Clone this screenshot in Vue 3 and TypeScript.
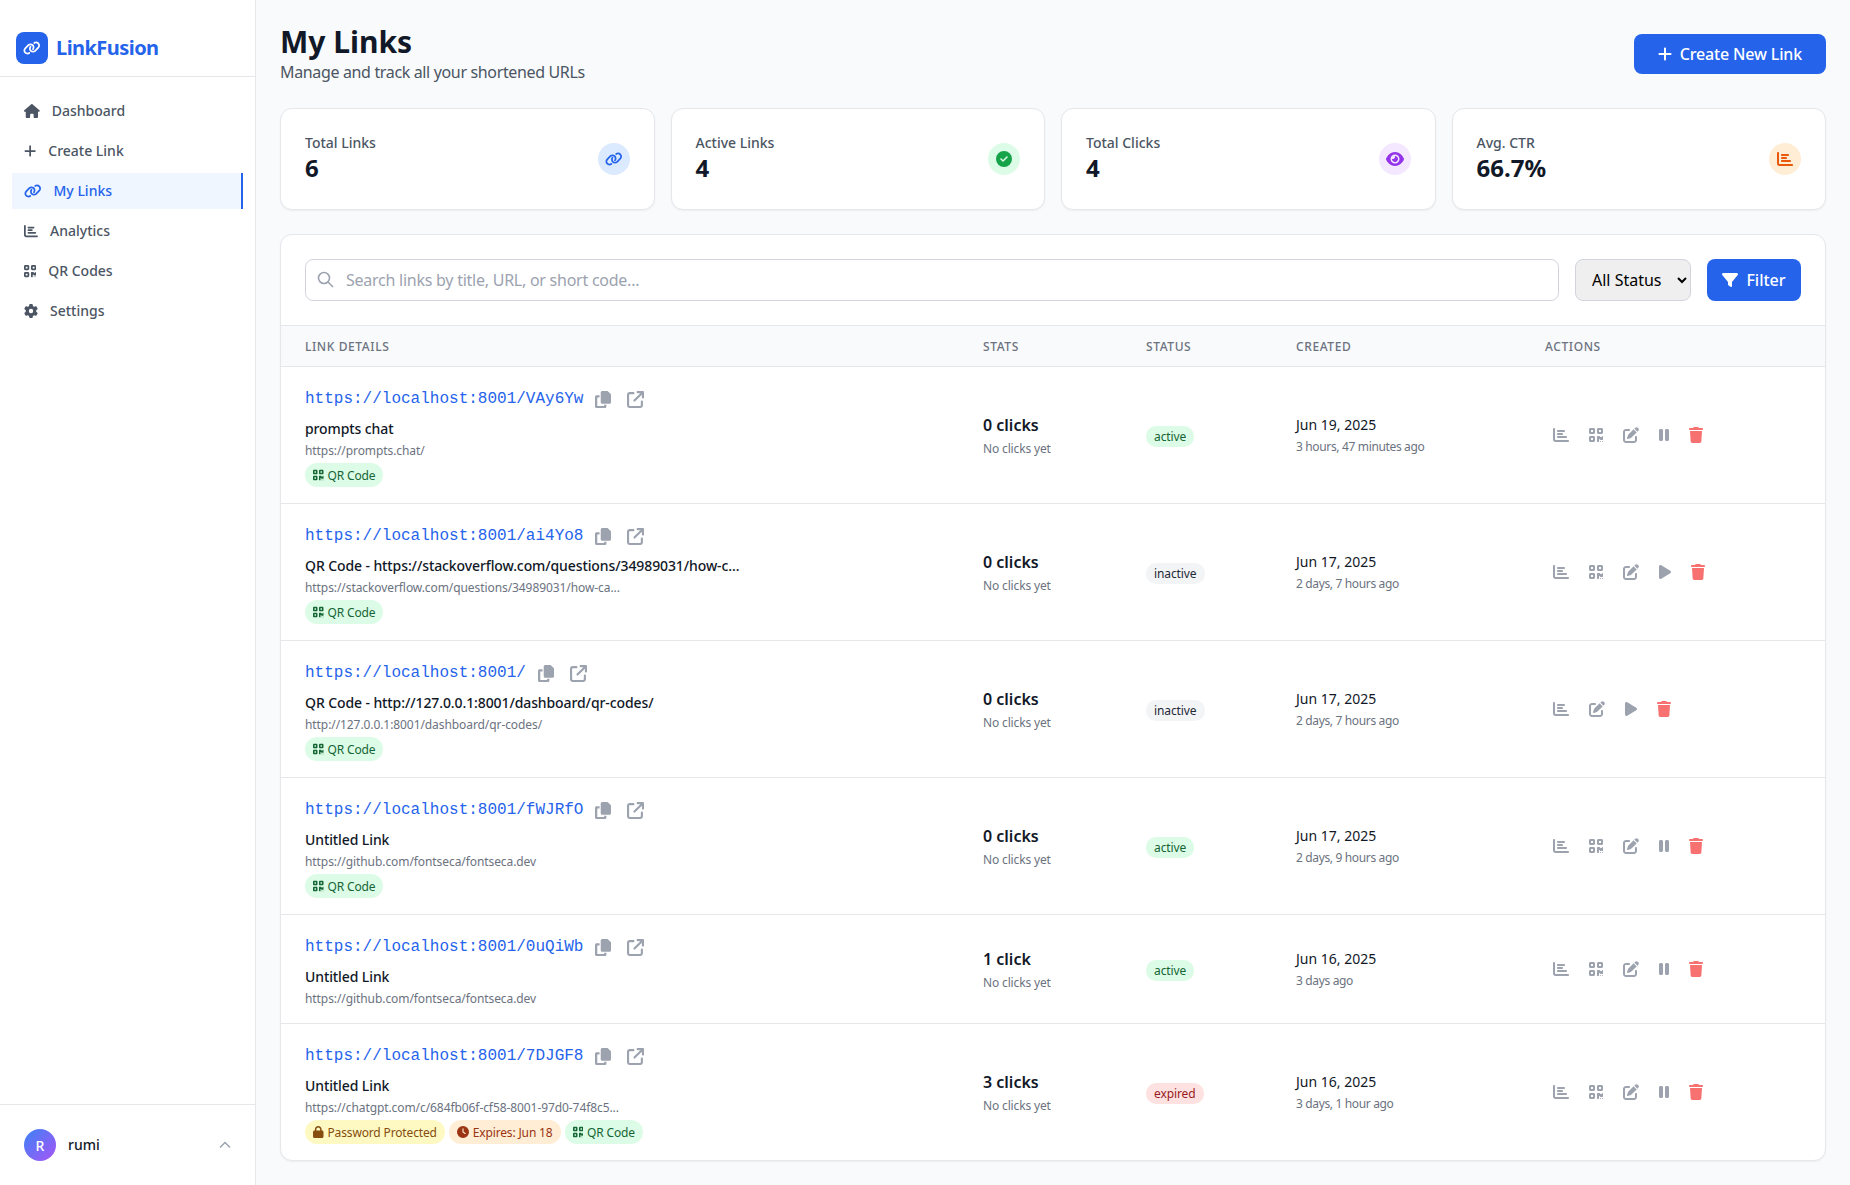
<template>
  <div class="layout">
    <aside class="sidebar">
      <div class="brand">
        <span class="brand-mark"><svg viewBox="0 0 640 512" width="17.5" height="14"><path :d="icons.link.d" /></svg></span>
        <span class="brand-name">LinkFusion</span>
      </div>
      <nav class="nav">
        <a v-for="item in navItems" :key="item.label" class="nav-item" :class="{ active: item.active }">
          <svg :viewBox="icons[item.icon].vb" :width="item.w" height="14"><path :d="icons[item.icon].d" /></svg>
          <span>{{ item.label }}</span>
        </a>
      </nav>
      <div class="user">
        <span class="avatar">R</span>
        <span class="user-name">rumi</span>
        <svg class="chevron" viewBox="0 0 12 8" width="12" height="8"><path d="M1 6.5 6 1.5l5 5" /></svg>
      </div>
    </aside>

    <main class="main">
      <header class="page-head">
        <div>
          <h1>My Links</h1>
          <p>Manage and track all your shortened URLs</p>
        </div>
        <button class="btn create">
          <svg viewBox="0 0 448 512" width="14" height="16"><path :d="icons.plus.d" /></svg>
          <span>Create New Link</span>
        </button>
      </header>

      <section class="stats">
        <div v-for="stat in stats" :key="stat.label" class="stat">
          <div>
            <div class="stat-label">{{ stat.label }}</div>
            <div class="stat-value">{{ stat.value }}</div>
          </div>
          <span class="stat-icon" :class="stat.tone">
            <svg :viewBox="icons[stat.icon].vb" :width="stat.w" :height="stat.h"><path :d="icons[stat.icon].d" /></svg>
          </span>
        </div>
      </section>

      <section class="panel">
        <div class="filters">
          <div class="search">
            <svg viewBox="0 0 17 17" width="17" height="17"><circle cx="7" cy="7" r="5.5" /><path d="m11 11 5 5" /></svg>
            <input type="text" placeholder="Search links by title, URL, or short code..." />
          </div>
          <select class="status-select">
            <option>All Status</option>
          </select>
          <button class="btn filter">
            <svg viewBox="0 0 512 512" width="16" height="16"><path :d="icons.filter.d" /></svg>
            Filter
          </button>
        </div>

        <table class="links">
          <colgroup>
            <col style="width: 678px" />
            <col style="width: 163px" />
            <col style="width: 150px" />
            <col style="width: 249px" />
            <col />
          </colgroup>
          <thead>
            <tr>
              <th>Link Details</th>
              <th>Stats</th>
              <th>Status</th>
              <th>Created</th>
              <th>Actions</th>
            </tr>
          </thead>
          <tbody>
            <tr v-for="row in rows" :key="row.short">
              <td class="details">
                <div class="short-line">
                  <span class="short">{{ row.short }}</span>
                  <button class="icon-btn"><svg viewBox="0 0 448 512" width="16" height="17" preserveAspectRatio="none"><path :d="icons.copy.d" /></svg></button>
                  <button class="icon-btn"><svg viewBox="0 0 512 512" width="17" height="17"><path :d="icons.external.d" /></svg></button>
                </div>
                <div class="title">{{ row.title }}</div>
                <div class="dest">{{ row.dest }}</div>
                <div v-if="row.badges.length" class="badges">
                  <span v-for="b in row.badges" :key="b" class="badge" :class="badgeDefs[b].tone">
                    <svg :viewBox="icons[badgeDefs[b].icon].vb" :width="badgeDefs[b].w" height="12"><path :d="icons[badgeDefs[b].icon].d" /></svg>
                    {{ badgeDefs[b].text }}
                  </span>
                </div>
              </td>
              <td>
                <div class="clicks">{{ row.clicks }}</div>
                <div class="clicks-sub">No clicks yet</div>
              </td>
              <td><span class="pill" :class="row.status">{{ row.status }}</span></td>
              <td>
                <div class="date">{{ row.date }}</div>
                <div class="ago">{{ row.ago }}</div>
              </td>
              <td>
                <div class="actions">
                  <button class="act">
                    <svg viewBox="0 0 512 512" width="16" height="16"><path :d="icons.chart.d" /></svg>
                  </button>
                  <button v-if="row.qr" class="act">
                    <svg viewBox="0 0 448 512" width="14" height="16"><path :d="icons.qr.d" /></svg>
                  </button>
                  <button class="act">
                    <svg viewBox="0 0 512 512" width="16" height="16"><path :d="icons.edit.d" /></svg>
                  </button>
                  <button class="act">
                    <svg v-if="row.status === 'inactive'" viewBox="0 0 384 512" width="12" height="16"><path :d="icons.play.d" /></svg>
                    <svg v-else viewBox="0 0 320 512" width="10" height="16"><path :d="icons.pause.d" /></svg>
                  </button>
                  <button class="act danger">
                    <svg viewBox="0 0 448 512" width="14" height="16"><path :d="icons.trash.d" /></svg>
                  </button>
                </div>
              </td>
            </tr>
          </tbody>
        </table>
      </section>
    </main>
  </div>
</template>

<script setup lang="ts">
type IconName = 'link' | 'home' | 'plus' | 'chart' | 'qr' | 'cog' | 'check' | 'eye' | 'filter' | 'copy' | 'external' | 'edit' | 'pause' | 'play' | 'trash' | 'lock' | 'clock'
type BadgeName = 'qr' | 'lock' | 'exp'

interface LinkRow {
  short: string
  title: string
  dest: string
  clicks: string
  status: 'active' | 'inactive' | 'expired'
  date: string
  ago: string
  qr: boolean
  badges: BadgeName[]
}

const icons: Record<IconName, { vb: string; d: string }> = {
  link: { vb: '0 0 640 512', d: 'M579.8 267.7c56.5-56.5 56.5-148 0-204.5c-50-50-128.8-56.5-186.3-15.4l-1.6 1.1c-14.4 10.3-17.7 30.3-7.4 44.6s30.3 17.7 44.6 7.4l1.6-1.1c32.1-22.9 76-19.3 103.8 8.6c31.5 31.5 31.5 82.5 0 114L422.3 334.8c-31.5 31.5-82.5 31.5-114 0c-27.9-27.9-31.5-71.8-8.6-103.8l1.1-1.6c10.3-14.4 6.9-34.4-7.4-44.6s-34.4-6.9-44.6 7.4l-1.1 1.6C206.5 251.2 213 330 263 380c56.5 56.5 148 56.5 204.5 0L579.8 267.7zM60.2 244.3c-56.5 56.5-56.5 148 0 204.5c50 50 128.8 56.5 186.3 15.4l1.6-1.1c14.4-10.3 17.7-30.3 7.4-44.6s-30.3-17.7-44.6-7.4l-1.6 1.1c-32.1 22.9-76 19.3-103.8-8.6C74 372 74 321 105.5 289.5L217.7 177.2c31.5-31.5 82.5-31.5 114 0c27.9 27.9 31.5 71.8 8.6 103.9l-1.1 1.6c-10.3 14.4-6.9 34.4 7.4 44.6s34.4 6.9 44.6-7.4l1.1-1.6C433.5 260.8 427 182 377 132c-56.5-56.5-148-56.5-204.5 0L60.2 244.3z' },
  home: { vb: '0 0 576 512', d: 'M575.8 255.5c0 18-15 32.1-32 32.1h-32l.7 160.2c0 2.7-.2 5.4-.5 8.1V472c0 22.1-17.9 40-40 40H456c-1.1 0-2.2 0-3.3-.1c-1.4 .1-2.8 .1-4.2 .1H416 392c-22.1 0-40-17.9-40-40V448 384c0-17.7-14.3-32-32-32H256c-17.7 0-32 14.3-32 32v64 24c0 22.1-17.9 40-40 40H160 128.1c-1.5 0-3-.1-4.5-.2c-1.2 .1-2.4 .2-3.6 .2H104c-22.1 0-40-17.9-40-40V360c0-.9 0-1.9 .1-2.8V287.6H32c-18 0-32-14-32-32.1c0-9 3-17 10-24L266.4 8c7-7 15-8 22-8s15 2 21 7L564.8 231.5c8 7 12 15 11 24z' },
  plus: { vb: '0 0 448 512', d: 'M256 80c0-17.7-14.3-32-32-32s-32 14.3-32 32V224H48c-17.7 0-32 14.3-32 32s14.3 32 32 32H192V432c0 17.7 14.3 32 32 32s32-14.3 32-32V288H400c17.7 0 32-14.3 32-32s-14.3-32-32-32H256V80z' },
  chart: { vb: '0 0 512 512', d: 'M32 32c17.7 0 32 14.3 32 32V400c0 8.8 7.2 16 16 16H480c17.7 0 32 14.3 32 32s-14.3 32-32 32H80c-44.2 0-80-35.8-80-80V64C0 46.3 14.3 32 32 32zm96 96c0-17.7 14.3-32 32-32l192 0c17.7 0 32 14.3 32 32s-14.3 32-32 32l-192 0c-17.7 0-32-14.3-32-32zm32 64H288c17.7 0 32 14.3 32 32s-14.3 32-32 32H160c-17.7 0-32-14.3-32-32s14.3-32 32-32zm0 96H416c17.7 0 32 14.3 32 32s-14.3 32-32 32H160c-17.7 0-32-14.3-32-32s14.3-32 32-32z' },
  qr: { vb: '0 0 448 512', d: 'M0 80C0 53.5 21.5 32 48 32h96c26.5 0 48 21.5 48 48v96c0 26.5-21.5 48-48 48H48c-26.5 0-48-21.5-48-48V80zM64 96v64h64V96H64zM0 336c0-26.5 21.5-48 48-48h96c26.5 0 48 21.5 48 48v96c0 26.5-21.5 48-48 48H48c-26.5 0-48-21.5-48-48V336zm64 16v64h64V352H64zM304 32h96c26.5 0 48 21.5 48 48v96c0 26.5-21.5 48-48 48H304c-26.5 0-48-21.5-48-48V80c0-26.5 21.5-48 48-48zm80 64H320v64h64V96zM256 304c0-8.8 7.2-16 16-16h64c8.8 0 16 7.2 16 16s7.2 16 16 16h32c8.8 0 16-7.2 16-16s7.2-16 16-16s16 7.2 16 16v96c0 8.8-7.2 16-16 16H368c-8.8 0-16-7.2-16-16s-7.2-16-16-16s-16 7.2-16 16v64c0 8.8-7.2 16-16 16H272c-8.8 0-16-7.2-16-16V304zM368 480a16 16 0 1 1 0-32 16 16 0 1 1 0 32zm64 0a16 16 0 1 1 0-32 16 16 0 1 1 0 32z' },
  cog: { vb: '0 0 512 512', d: 'M495.9 166.6c3.2 8.7 .5 18.4-6.4 24.6l-43.3 39.4c1.1 8.3 1.7 16.8 1.7 25.4s-.6 17.1-1.7 25.4l43.3 39.4c6.9 6.2 9.6 15.9 6.4 24.6c-4.4 11.9-9.7 23.3-15.8 34.3l-4.7 8.1c-6.6 11-14 21.4-22.1 31.2c-5.9 7.2-15.7 9.6-24.5 6.8l-55.7-17.7c-13.4 10.3-28.2 18.9-44 25.4l-12.5 57.1c-2 9.1-9 16.3-18.2 17.8c-13.8 2.3-28 3.5-42.5 3.5s-28.7-1.2-42.5-3.5c-9.2-1.5-16.2-8.7-18.2-17.8l-12.5-57.1c-15.8-6.5-30.6-15.1-44-25.4L83.1 425.9c-8.8 2.8-18.6 .3-24.5-6.8c-8.1-9.8-15.5-20.2-22.1-31.2l-4.7-8.1c-6.1-11-11.4-22.4-15.8-34.3c-3.2-8.7-.5-18.4 6.4-24.6l43.3-39.4C64.6 273.1 64 264.6 64 256s.6-17.1 1.7-25.4L22.4 191.2c-6.9-6.2-9.6-15.9-6.4-24.6c4.4-11.9 9.7-23.3 15.8-34.3l4.7-8.1c6.6-11 14-21.4 22.1-31.2c5.9-7.2 15.7-9.6 24.5-6.8l55.7 17.7c13.4-10.3 28.2-18.9 44-25.4l12.5-57.1c2-9.1 9-16.3 18.2-17.8C227.3 1.2 241.5 0 256 0s28.7 1.2 42.5 3.5c9.2 1.5 16.2 8.7 18.2 17.8l12.5 57.1c15.8 6.5 30.6 15.1 44 25.4l55.7-17.7c8.8-2.8 18.6-.3 24.5 6.8c8.1 9.8 15.5 20.2 22.1 31.2l4.7 8.1c6.1 11 11.4 22.4 15.8 34.3zM256 336a80 80 0 1 0 0-160 80 80 0 1 0 0 160z' },
  check: { vb: '0 0 512 512', d: 'M256 512A256 256 0 1 0 256 0a256 256 0 1 0 0 512zM369 209L241 337c-9.4 9.4-24.6 9.4-33.9 0l-64-64c-9.4-9.4-9.4-24.6 0-33.9s24.6-9.4 33.9 0l47 47L335 175c9.4-9.4 24.6-9.4 33.9 0s9.4 24.6 0 33.9z' },
  eye: { vb: '0 0 576 512', d: 'M288 32c-80.8 0-145.5 36.8-192.6 80.6C48.6 156 17.3 208 2.5 243.7c-3.3 7.9-3.3 16.7 0 24.6C17.3 304 48.6 356 95.4 399.4C142.5 443.2 207.2 480 288 480s145.5-36.8 192.6-80.6c46.8-43.5 78.1-95.4 93-131.1c3.3-7.9 3.3-16.7 0-24.6c-14.9-35.7-46.2-87.7-93-131.1C433.5 68.8 368.8 32 288 32zM144 256a144 144 0 1 1 288 0 144 144 0 1 1 -288 0zm144-64c0 35.3-28.7 64-64 64c-7.1 0-13.9-1.2-20.3-3.3c-5.5-1.8-11.9 1.6-11.7 7.4c.3 6.9 1.3 13.8 3.2 20.7c13.7 51.2 66.4 81.6 117.6 67.9s81.6-66.4 67.9-117.6c-11.1-41.5-47.8-69.4-88.6-71.1c-5.8-.2-9.2 6.1-7.4 11.7c2.1 6.4 3.3 13.2 3.3 20.3z' },
  filter: { vb: '0 0 512 512', d: 'M3.9 54.9C10.5 40.9 24.5 32 40 32H472c15.5 0 29.5 8.9 36.1 22.9s4.6 30.5-5.2 42.5L320 320.9V448c0 12.1-6.8 23.2-17.7 28.6s-23.8 4.3-33.5-3l-64-48c-8.1-6-12.8-15.5-12.8-25.6V320.9L9 97.3C-.7 85.4-2.8 68.8 3.9 54.9z' },
  copy: { vb: '0 0 448 512', d: 'M208 0H332.1c12.7 0 24.9 5.1 33.9 14.1l67.9 67.9c9 9 14.1 21.2 14.1 33.9V336c0 26.5-21.5 48-48 48H208c-26.5 0-48-21.5-48-48V48c0-26.5 21.5-48 48-48zM48 128h80v64H64V448H256V416h64v48c0 26.5-21.5 48-48 48H48c-26.5 0-48-21.5-48-48V176c0-26.5 21.5-48 48-48z' },
  external: { vb: '0 0 512 512', d: 'M320 0c-17.7 0-32 14.3-32 32s14.3 32 32 32h82.7L201.4 265.4c-12.5 12.5-12.5 32.8 0 45.3s32.8 12.5 45.3 0L448 109.3V192c0 17.7 14.3 32 32 32s32-14.3 32-32V32c0-17.7-14.3-32-32-32H320zM80 32C35.8 32 0 67.8 0 112V432c0 44.2 35.8 80 80 80H400c44.2 0 80-35.8 80-80V320c0-17.7-14.3-32-32-32s-32 14.3-32 32V432c0 8.8-7.2 16-16 16H80c-8.8 0-16-7.2-16-16V112c0-8.8 7.2-16 16-16H192c17.7 0 32-14.3 32-32s-14.3-32-32-32H80z' },
  edit: { vb: '0 0 512 512', d: 'M471.6 21.7c-21.9-21.9-57.3-21.9-79.2 0L362.3 51.7l97.9 97.9 30.1-30.1c21.9-21.9 21.9-57.3 0-79.2L471.6 21.7zm-299.2 220c-6.1 6.1-10.8 13.6-13.5 21.9l-29.6 88.8c-2.9 8.6-.6 18.1 5.8 24.6s15.9 8.7 24.6 5.8l88.8-29.6c8.2-2.7 15.7-7.4 21.9-13.5L437.7 172.3 339.7 74.3 172.4 241.7zM96 64C43 64 0 107 0 160V416c0 53 43 96 96 96H352c53 0 96-43 96-96V320c0-17.7-14.3-32-32-32s-32 14.3-32 32v96c0 17.7-14.3 32-32 32H96c-17.7 0-32-14.3-32-32V160c0-17.7 14.3-32 32-32h96c17.7 0 32-14.3 32-32s-14.3-32-32-32H96z' },
  pause: { vb: '0 0 320 512', d: 'M48 64C21.5 64 0 85.5 0 112V400c0 26.5 21.5 48 48 48H80c26.5 0 48-21.5 48-48V112c0-26.5-21.5-48-48-48H48zm192 0c-26.5 0-48 21.5-48 48V400c0 26.5 21.5 48 48 48h32c26.5 0 48-21.5 48-48V112c0-26.5-21.5-48-48-48H240z' },
  play: { vb: '0 0 384 512', d: 'M73 39c-14.8-9.1-33.4-9.4-48.5-.9S0 62.6 0 80V432c0 17.4 9.4 33.4 24.5 41.9s33.7 8.1 48.5-.9L361 297c14.3-8.7 23-24.2 23-41s-8.7-32.2-23-41L73 39z' },
  trash: { vb: '0 0 448 512', d: 'M135.2 17.7L128 32H32C14.3 32 0 46.3 0 64S14.3 96 32 96H416c17.7 0 32-14.3 32-32s-14.3-32-32-32H320l-7.2-14.3C307.4 6.8 296.3 0 284.2 0H163.8c-12.1 0-23.2 6.8-28.6 17.7zM416 128H32L53.2 467c1.6 25.3 22.6 45 47.9 45H346.9c25.3 0 46.3-19.7 47.9-45L416 128z' },
  lock: { vb: '0 0 448 512', d: 'M144 144v48H304V144c0-44.2-35.8-80-80-80s-80 35.8-80 80zM80 192V144C80 64.5 144.5 0 224 0s144 64.5 144 144v48h16c35.3 0 64 28.7 64 64V448c0 35.3-28.7 64-64 64H64c-35.3 0-64-28.7-64-64V256c0-35.3 28.7-64 64-64H80z' },
  clock: { vb: '0 0 512 512', d: 'M256 0a256 256 0 1 1 0 512A256 256 0 1 1 256 0zM232 120V256c0 8 4 15.5 10.7 20l96 64c11 7.4 25.9 5.4 33.3-5.7s5.4-25.9-5.7-33.3L280 243.2V120c0-13.3-10.7-24-24-24s-24 10.7-24 24z' }
}

const navItems: { label: string; icon: IconName; w: number; active?: boolean }[] = [
  { label: 'Dashboard', icon: 'home', w: 15.75 },
  { label: 'Create Link', icon: 'plus', w: 12.25 },
  { label: 'My Links', icon: 'link', w: 17.5, active: true },
  { label: 'Analytics', icon: 'chart', w: 14 },
  { label: 'QR Codes', icon: 'qr', w: 12.25 },
  { label: 'Settings', icon: 'cog', w: 14 }
]

const stats: { label: string; value: string; icon: IconName; tone: string; w: number; h: number }[] = [
  { label: 'Total Links', value: '6', icon: 'link', tone: 'blue', w: 17.5, h: 14 },
  { label: 'Active Links', value: '4', icon: 'check', tone: 'green', w: 16, h: 16 },
  { label: 'Total Clicks', value: '4', icon: 'eye', tone: 'purple', w: 18, h: 16 },
  { label: 'Avg. CTR', value: '66.7%', icon: 'chart', tone: 'orange', w: 16, h: 16 }
]

const badgeDefs: Record<BadgeName, { text: string; icon: IconName; tone: string; w: number }> = {
  qr: { text: 'QR Code', icon: 'qr', tone: 'green', w: 10.5 },
  lock: { text: 'Password Protected', icon: 'lock', tone: 'yellow', w: 10.5 },
  exp: { text: 'Expires: Jun 18', icon: 'clock', tone: 'orange', w: 12 }
}

const rows: LinkRow[] = [
  { short: 'https://localhost:8001/VAy6Yw', title: 'prompts chat', dest: 'https://prompts.chat/', clicks: '0 clicks', status: 'active', date: 'Jun 19, 2025', ago: '3 hours, 47 minutes ago', qr: true, badges: ['qr'] },
  { short: 'https://localhost:8001/ai4Yo8', title: 'QR Code - https://stackoverflow.com/questions/34989031/how-c...', dest: 'https://stackoverflow.com/questions/34989031/how-ca...', clicks: '0 clicks', status: 'inactive', date: 'Jun 17, 2025', ago: '2 days, 7 hours ago', qr: true, badges: ['qr'] },
  { short: 'https://localhost:8001/', title: 'QR Code - http://127.0.0.1:8001/dashboard/qr-codes/', dest: 'http://127.0.0.1:8001/dashboard/qr-codes/', clicks: '0 clicks', status: 'inactive', date: 'Jun 17, 2025', ago: '2 days, 7 hours ago', qr: false, badges: ['qr'] },
  { short: 'https://localhost:8001/fWJRfO', title: 'Untitled Link', dest: 'https://github.com/fontseca/fontseca.dev', clicks: '0 clicks', status: 'active', date: 'Jun 17, 2025', ago: '2 days, 9 hours ago', qr: true, badges: ['qr'] },
  { short: 'https://localhost:8001/0uQiWb', title: 'Untitled Link', dest: 'https://github.com/fontseca/fontseca.dev', clicks: '1 click', status: 'active', date: 'Jun 16, 2025', ago: '3 days ago', qr: true, badges: [] },
  { short: 'https://localhost:8001/7DJGF8', title: 'Untitled Link', dest: 'https://chatgpt.com/c/684fb06f-cf58-8001-97d0-74f8c5...', clicks: '3 clicks', status: 'expired', date: 'Jun 16, 2025', ago: '3 days, 1 hour ago', qr: true, badges: ['lock', 'exp', 'qr'] }
]
</script>

<style>
html,
body {
  margin: 0;
  background: #f9fafb;
}
</style>

<style scoped>
.layout {
  display: flex;
  height: 100vh;
  overflow: hidden;
  background: #f9fafb;
  font-family: "Noto Sans", "Open Sans", sans-serif;
  color: #111827;
}

svg {
  fill: currentColor;
  flex: none;
  display: block;
}

/* sidebar */
.sidebar {
  width: 255px;
  flex: none;
  display: flex;
  flex-direction: column;
  background: #fff;
  border-right: 1px solid #e5e7eb;
}

.brand {
  display: flex;
  align-items: center;
  gap: 8px;
  padding: 32px 16px 12px;
  border-bottom: 1px solid #e5e7eb;
}

.brand-mark {
  width: 32px;
  height: 32px;
  border-radius: 8px;
  background: #2563eb;
  color: #fff;
  display: flex;
  align-items: center;
  justify-content: center;
}

.brand-name {
  margin-bottom: 2px;
  font-size: 20px;
  font-weight: 700;
  letter-spacing: -0.55px;
  color: #2563eb;
}

.nav {
  flex: 1;
  display: flex;
  flex-direction: column;
  gap: 4px;
  padding: 16px 12px;
}

.nav-item {
  display: flex;
  align-items: center;
  gap: 12px;
  height: 36px;
  padding: 0 12px;
  box-sizing: border-box;
  font-size: 14px;
  font-weight: 500;
  color: #4b5563;
}

.nav-item span {
  margin-bottom: 2px;
}

.nav-item.active {
  background: #eff6ff;
  color: #2563eb;
  border-right: 2px solid #2563eb;
}

.user {
  display: flex;
  align-items: center;
  gap: 12px;
  padding: 24px;
  border-top: 1px solid #e5e7eb;
}

.avatar {
  width: 32px;
  height: 32px;
  border-radius: 50%;
  background: linear-gradient(135deg, #3b82f6, #a855f7);
  color: #fff;
  font-size: 14px;
  font-weight: 500;
  display: flex;
  align-items: center;
  justify-content: center;
}

.user-name {
  flex: 1;
  margin-bottom: 2px;
  font-size: 14px;
  font-weight: 500;
}

.chevron {
  fill: none;
  stroke: #9ca3af;
  stroke-width: 1.5;
}

/* main */
.main {
  flex: 1;
  min-width: 0;
  padding: 24px;
}

.page-head {
  display: flex;
  justify-content: space-between;
  align-items: center;
  margin-bottom: 24px;
}

h1 {
  margin: 0;
  font-size: 30px;
  line-height: 36px;
  font-weight: 700;
}

.page-head p {
  margin: 0;
  font-size: 16px;
  line-height: 24px;
  letter-spacing: -0.35px;
  color: #4b5563;
}

.btn {
  display: flex;
  align-items: center;
  gap: 8px;
  border: 0;
  border-radius: 8px;
  background: #2563eb;
  color: #fff;
  font: inherit;
  font-size: 16px;
  font-weight: 500;
}

.create {
  height: 40px;
  padding: 0 24px;
  letter-spacing: -0.15px;
}

.stats {
  display: grid;
  grid-template-columns: repeat(4, 1fr);
  gap: 16px;
  margin-bottom: 24px;
}

.stat {
  display: flex;
  justify-content: space-between;
  align-items: center;
  padding: 24px;
  background: #fff;
  border: 1px solid #e5e7eb;
  border-radius: 12px;
  box-shadow: 0 1px 2px rgba(0, 0, 0, 0.05);
}

.stat-label {
  font-size: 14px;
  line-height: 20px;
  font-weight: 500;
  color: #4b5563;
}

.stat-value {
  padding-bottom: 2px;
  font-size: 24px;
  line-height: 30px;
  font-weight: 700;
}

.stat-icon {
  width: 32px;
  height: 32px;
  border-radius: 50%;
  display: flex;
  align-items: center;
  justify-content: center;
}

.stat-icon.blue { background: #dbeafe; color: #2563eb; }
.stat-icon.green { background: #dcfce7; color: #16a34a; }
.stat-icon.purple { background: #f3e8ff; color: #9333ea; }
.stat-icon.orange { background: #ffedd5; color: #ea580c; }

/* table panel */
.panel {
  background: #fff;
  border: 1px solid #e5e7eb;
  border-radius: 12px;
  box-shadow: 0 1px 2px rgba(0, 0, 0, 0.05);
  overflow: hidden;
}

.filters {
  display: flex;
  gap: 16px;
  padding: 24px;
  border-bottom: 1px solid #e5e7eb;
}

.search {
  position: relative;
  flex: 1;
  color: #9ca3af;
}

.search svg {
  position: absolute;
  left: 12px;
  top: 12px;
  fill: none;
  stroke: currentColor;
  stroke-width: 1.6;
}

.search input {
  width: 100%;
  height: 42px;
  box-sizing: border-box;
  padding: 0 16px 0 40px;
  border: 1px solid #d1d5db;
  border-radius: 8px;
  font: inherit;
  font-size: 16px;
  letter-spacing: -0.25px;
  outline: none;
}

.search input::placeholder {
  color: #9ca3af;
}

.status-select {
  width: 116px;
  height: 42px;
  padding: 0 12px;
  border: 1px solid #d1d5db;
  border-radius: 8px;
  background-color: #efefef;
  font: inherit;
  font-size: 16px;
  color: #000;
}

.filter {
  width: 94px;
  height: 42px;
  justify-content: center;
}

.links {
  width: 100%;
  border-collapse: separate;
  border-spacing: 0;
  table-layout: fixed;
}

th {
  height: 41px;
  padding: 0 24px;
  box-sizing: border-box;
  background: #f9fafb;
  border-bottom: 1px solid #e5e7eb;
  font-size: 12px;
  font-weight: 500;
  letter-spacing: 0.05em;
  text-align: left;
  text-transform: uppercase;
  color: #6b7280;
}

td {
  padding: 16px 24px;
  border-bottom: 1px solid #e5e7eb;
  vertical-align: middle;
}

tbody tr:last-child td {
  border-bottom: 0;
}

.short-line {
  display: flex;
  align-items: center;
  gap: 8px;
  height: 32px;
  margin-bottom: 4px;
}

.short {
  font-family: "Liberation Mono", monospace;
  font-size: 16px;
  color: #2563eb;
}

.icon-btn {
  border: 0;
  background: none;
  padding: 0 4px;
  color: #9ca3af;
}

.title {
  font-size: 14px;
  line-height: 20px;
  font-weight: 500;
  letter-spacing: -0.1px;
  color: #111827;
}

.dest {
  margin-top: 4px;
  font-size: 12px;
  line-height: 16px;
  letter-spacing: -0.08px;
  color: #6b7280;
}

.badges {
  display: flex;
  gap: 4px;
  margin-top: 4px;
}

.badge {
  display: flex;
  align-items: center;
  gap: 4px;
  height: 24px;
  padding: 0 8px;
  border-radius: 12px;
  font-size: 12px;
  letter-spacing: -0.15px;
}

.badge.green { background: #dcfce7; color: #166534; }
.badge.yellow { background: #fef9c3; color: #854d0e; }
.badge.orange { background: #ffedd5; color: #9a3412; }

.clicks {
  font-size: 16px;
  line-height: 24px;
  font-weight: 600;
}

.clicks-sub {
  margin-top: 4px;
  font-size: 12px;
  line-height: 16px;
  letter-spacing: -0.15px;
  color: #6b7280;
}

.pill {
  display: inline-block;
  padding: 2px 8px;
  border-radius: 10px;
  font-size: 12px;
  line-height: 17px;
  letter-spacing: -0.1px;
}

.pill.active { background: #dcfce7; color: #166534; }
.pill.inactive { background: #f3f4f6; color: #1f2937; }
.pill.expired { background: #fee2e2; color: #991b1b; }

.date {
  font-size: 14px;
  line-height: 20px;
}

.ago {
  margin-top: 4px;
  font-size: 12px;
  line-height: 16px;
  letter-spacing: -0.35px;
  color: #6b7280;
}

.actions {
  display: flex;
  gap: 4px;
  align-items: center;
}

.act {
  border: 0;
  background: none;
  padding: 8px;
  color: #9ca3af;
}

.act.danger {
  color: #f87171;
}
</style>
